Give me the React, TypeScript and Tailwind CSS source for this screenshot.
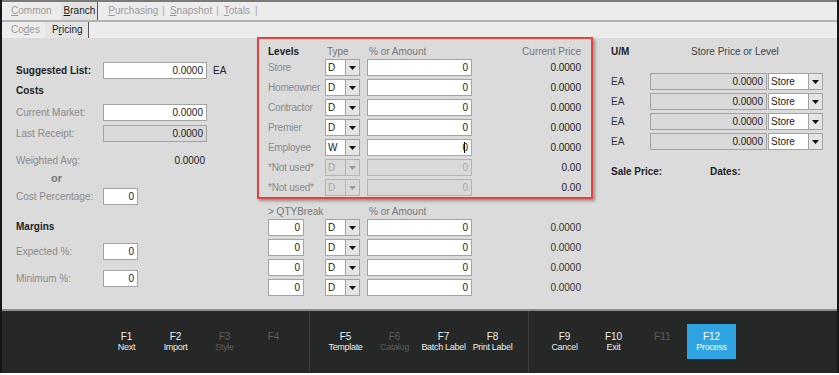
import React from 'react';

type FieldProps = {
  value: string;
  w: string;
  disabled?: boolean;
  focused?: boolean;
  grey?: boolean;
};

const Field: React.FC<FieldProps> = ({ value, w, disabled, focused, grey }) => {
  let tone = 'bg-white border-[#a3a3a3] text-[#222]';
  if (grey) tone = 'bg-[#d9d9d9] border-[#a3a3a3] text-[#222]';
  if (disabled) tone = 'bg-[#d9d9d9] border-[#b3b3b3] text-[#a8a8a8]';
  if (focused) tone = 'bg-white border-[#7eb4ea] text-[#222]';
  return (
    <div className={`${w} h-[17px] shrink-0 flex items-center justify-end pr-[3px] border ${tone}`}>
      {focused && <span className="w-px h-[11px] bg-black mr-[-3px]" />}
      <span>{value}</span>
    </div>
  );
};

const Caret: React.FC<{ color?: string }> = ({ color = '#111' }) => (
  <svg width="7" height="4" viewBox="0 0 7 4">
    <path d="M0 0h7L3.5 4z" fill={color} />
  </svg>
);

const Select: React.FC<{ value: string; w: string; disabled?: boolean }> = ({ value, w, disabled }) => (
  <div
    className={`${w} h-[17px] shrink-0 flex border ${
      disabled ? 'border-[#b3b3b3] bg-[#d9d9d9] text-[#a8a8a8]' : 'border-[#a3a3a3] bg-white text-[#222]'
    }`}
  >
    <span className="flex-1 pl-[2px] leading-[15px]">{value}</span>
    <span
      className={`w-[14px] flex items-center justify-center border-l ${
        disabled ? 'border-[#b3b3b3] bg-[#d9d9d9]' : 'border-[#a3a3a3] bg-[#e4e4e4]'
      }`}
    >
      <Caret color={disabled ? '#9a9a9a' : '#111'} />
    </span>
  </div>
);

const levels = [
  { name: 'Store', type: 'D', price: '0.0000' },
  { name: 'Homeowner', type: 'D', price: '0.0000' },
  { name: 'Contractor', type: 'D', price: '0.0000' },
  { name: 'Premier', type: 'D', price: '0.0000' },
  { name: 'Employee', type: 'W', price: '0.0000', focused: true },
  { name: '*Not used*', type: 'D', price: '0.00', off: true },
  { name: '*Not used*', type: 'D', price: '0.00', off: true },
];

const keyGroups = [
  [
    { k: 'F1', l: 'Next' },
    { k: 'F2', l: 'Import' },
    { k: 'F3', l: 'Style', off: true },
    { k: 'F4', l: '', off: true },
  ],
  [
    { k: 'F5', l: 'Template' },
    { k: 'F6', l: 'Catalog', off: true },
    { k: 'F7', l: 'Batch Label' },
    { k: 'F8', l: 'Print Label' },
  ],
  [
    { k: 'F9', l: 'Cancel' },
    { k: 'F10', l: 'Exit' },
    { k: 'F11', l: '', off: true },
    { k: 'F12', l: 'Process', active: true },
  ],
];

const Label: React.FC<{ children: React.ReactNode; w: string }> = ({ children, w }) => (
  <div className={`${w} shrink-0 text-[#8a8a8a]`}>{children}</div>
);

export default function App() {
  return (
    <div className="w-[839px] h-[375px] bg-white font-['Liberation_Sans',Arial,sans-serif] text-[10px] leading-none">
      <div className="h-[373px] flex flex-col border-l-2 border-r-2 border-[#161616]">
        {/* tab strip */}
        <div className="h-[2px] bg-[#7a7a7a]" />
        <div className="h-[18px] bg-[#ececec] flex items-center pl-[9px] text-[#9a9a9a]">
          <span><span className="underline">C</span>ommon</span>
          <span className="ml-[9px] h-full flex items-center pl-[3px] pr-[2px] bg-[#e2e2e2] text-[#222] border-r border-[#555]">
            <span className="underline">B</span>ranch
          </span>
          <span className="ml-[10px]"><span className="underline">P</span>urchasing</span>
          <span className="ml-[4px] text-[#aaa]">|</span>
          <span className="ml-[5px]"><span className="underline">S</span>napshot</span>
          <span className="ml-[4px] text-[#aaa]">|</span>
          <span className="ml-[5px]"><span className="underline">T</span>otals</span>
          <span className="ml-[5px] text-[#aaa]">|</span>
        </div>
        <div className="h-[2px] bg-[#b4b4b4]" />
        <div className="h-[16px] bg-[#ececec] flex items-center pl-[9px] text-[#9a9a9a]">
          <span>Co<span className="underline">d</span>es</span>
          <span className="ml-[5px] h-full flex items-center pl-[7px] pr-[5px] bg-[#e4e4e4] text-[#222] border-r border-[#555]">
            P<span className="underline">r</span>icing
          </span>
        </div>

        {/* main */}
        <div className="h-[271px] bg-[#dbdbdb] flex">
          {/* left */}
          <div className="w-[255px] shrink-0 pl-[14px] pt-[24px] flex flex-col">
            <div className="flex items-center">
              <div className="w-[87px] font-bold text-[#222]">Suggested List:</div>
              <Field w="w-[104px]" value="0.0000" />
              <span className="ml-[6px] text-[#222]">EA</span>
            </div>
            <div className="mt-[5px] h-[14px] flex items-center font-bold text-[#222]">Costs</div>
            <div className="mt-[6px] flex items-center">
              <Label w="w-[87px]">Current Market:</Label>
              <Field w="w-[104px]" value="0.0000" />
            </div>
            <div className="mt-[4px] flex items-center">
              <Label w="w-[87px]">Last Receipt:</Label>
              <Field w="w-[104px]" value="0.0000" grey />
            </div>
            <div className="mt-[10px] h-[17px] flex items-center">
              <Label w="w-[87px]">Weighted Avg:</Label>
              <div className="w-[104px] text-right pr-[2px] text-[#222]">0.0000</div>
            </div>
            <div className="mt-[2px] h-[14px] flex items-center pl-[35px] font-bold text-[11px] text-[#777]">or</div>
            <div className="mt-[3px] flex items-center">
              <Label w="w-[87px]">Cost Percentage:</Label>
              <Field w="w-[35px]" value="0" />
            </div>
            <div className="mt-[15px] h-[14px] flex items-center font-bold text-[#222]">Margins</div>
            <div className="mt-[9px] flex items-center">
              <Label w="w-[87px]">Expected %:</Label>
              <Field w="w-[35px]" value="0" />
            </div>
            <div className="mt-[10px] flex items-center">
              <Label w="w-[87px]">Minimum %:</Label>
              <Field w="w-[35px]" value="0" />
            </div>
          </div>

          {/* middle */}
          <div className="w-[343px] shrink-0 flex flex-col">
            <div className="mt-[-1px] w-[336px] border-2 border-[#e8423c] shadow-[2px_2px_3px_rgba(0,0,0,0.35)] pl-[9px] pr-[10px] pt-[7px] pb-[1px] flex flex-col gap-[3px]">
              <div className="h-[12px] flex items-center mb-[-2px]">
                <div className="w-[59px] font-bold text-[#222]">Levels</div>
                <div className="w-[42px] text-[#777]">Type</div>
                <div className="flex-1 text-[#777]">% or Amount</div>
                <div className="text-[#777]">Current Price</div>
              </div>
              {levels.map((lv, i) => (
                <div key={i} className="h-[17px] flex items-center">
                  <div className="w-[57px] shrink-0 text-[#8a8a8a] tracking-[-0.2px] whitespace-nowrap">{lv.name}</div>
                  <Select w="w-[35px]" value={lv.type} disabled={lv.off} />
                  <div className="w-[7px]" />
                  <Field w="w-[105px]" value="0" disabled={lv.off} focused={lv.focused} />
                  <div className="flex-1 text-right text-[#222]">{lv.price}</div>
                </div>
              ))}
            </div>
            <div className="pl-[11px] pr-[19px] mt-[7px] flex flex-col gap-[3px]">
              <div className="h-[12px] flex items-center mb-[-2px] text-[#777]">
                <div className="w-[101px]">&gt; QTYBreak</div>
                <div>% or Amount</div>
              </div>
              {[0, 1, 2, 3].map((i) => (
                <div key={i} className="h-[17px] flex items-center">
                  <Field w="w-[36px]" value="0" />
                  <div className="w-[21px]" />
                  <Select w="w-[35px]" value="D" />
                  <div className="w-[7px]" />
                  <Field w="w-[105px]" value="0" />
                  <div className="flex-1 text-right text-[#333]">0.0000</div>
                </div>
              ))}
            </div>
          </div>

          {/* right */}
          <div className="flex-1 pl-[11px] pt-[8px] flex flex-col">
            <div className="h-[12px] flex items-center">
              <div className="w-[80px] font-bold text-[#222]">U/M</div>
              <div className="text-[#444]">Store Price or Level</div>
            </div>
            <div className="mt-[15px] flex flex-col gap-[3px]">
              {[0, 1, 2, 3].map((i) => (
                <div key={i} className="h-[17px] flex items-center">
                  <div className="w-[39px] text-[#333]">EA</div>
                  <Field w="w-[117px]" value="0.0000" grey />
                  <div className="w-[1px]" />
                  <Select w="w-[55px]" value="Store" />
                </div>
              ))}
            </div>
            <div className="mt-[16px] h-[12px] flex items-center font-bold text-[#222]">
              <div className="w-[99px]">Sale Price:</div>
              <div>Dates:</div>
            </div>
          </div>
        </div>

        {/* function key bar */}
        <div className="h-[2px] bg-[#8c8c8c]" />
        <div className="h-[62px] bg-[#262828] flex pl-[100px]">
          {keyGroups.map((g, gi) => (
            <React.Fragment key={gi}>
              {gi > 0 && <div className="w-px bg-[#3b3d3d] mx-[11px]" />}
              <div className="flex pt-[13px]">
                {g.map((b) => (
                  <div
                    key={b.k}
                    className={`w-[49px] h-[35px] flex flex-col items-center justify-center text-center ${
                      b.active ? 'bg-[#2fa4e3] text-white' : b.off ? 'text-[#5c5e5e]' : 'text-[#ededed]'
                    }`}
                  >
                    <div className="text-[10px] leading-[10px]">{b.k}</div>
                    <div className="text-[9px] leading-[10px] tracking-[-0.3px] whitespace-nowrap h-[10px]">{b.l}</div>
                  </div>
                ))}
              </div>
            </React.Fragment>
          ))}
        </div>
      </div>
    </div>
  );
}
